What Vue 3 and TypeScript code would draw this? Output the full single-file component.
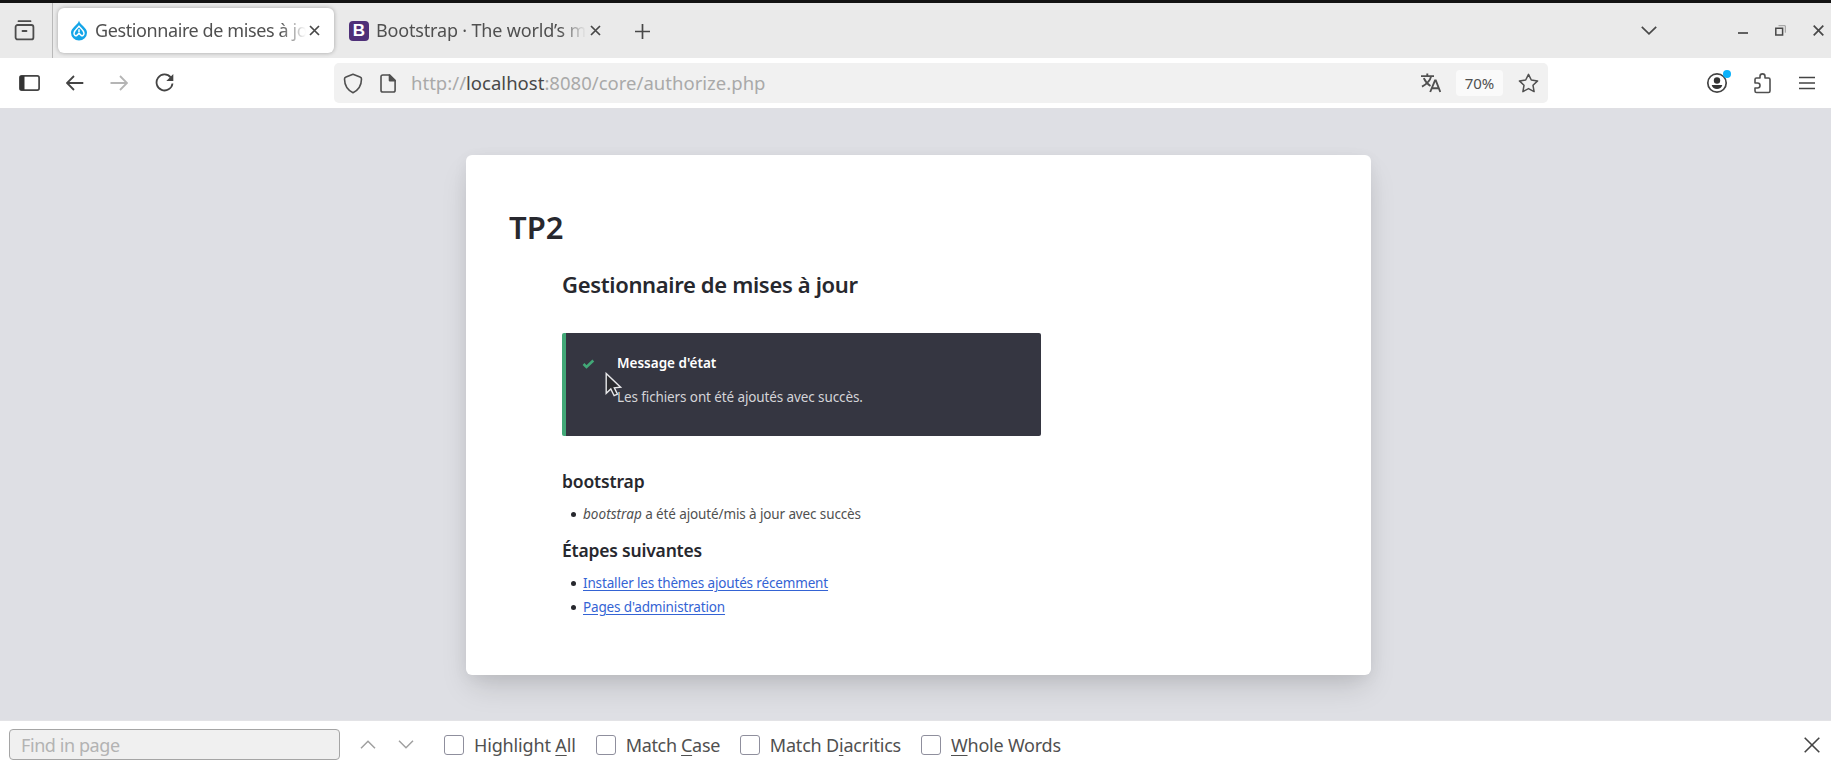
<script setup lang="ts">
interface FindOption {
  id: string
  before: string
  key: string
  after: string
}

const findOptions: FindOption[] = [
  { id: 'highlight', before: 'Highlight ', key: 'A', after: 'll' },
  { id: 'case', before: 'Match ', key: 'C', after: 'ase' },
  { id: 'diacritics', before: 'Match D', key: 'i', after: 'acritics' },
  { id: 'words', before: '', key: 'W', after: 'hole Words' },
]

const nextSteps: string[] = ['Installer les thèmes ajoutés récemment', "Pages d'administration"]
</script>

<template>
  <div class="window">
    <header class="tabbar">
      <div class="overview">
        <svg width="22" height="22" viewBox="0 0 22 22" fill="none" stroke="#4c4c4c" stroke-width="1.8" stroke-linecap="round">
          <path d="M4.5 1.2h12M3.6 5h13.8a2 2 0 0 1 2 2v10.4a2 2 0 0 1-2 2H3.6a2 2 0 0 1-2-2V7a2 2 0 0 1 2-2zM8.5 11h4" />
        </svg>
      </div>
      <div class="tab active">
        <svg class="favicon drupal" width="18" height="21" viewBox="0 0 18 21">
          <path d="M9 .5C8.300 3.400 6.400 4.600 4.700 6.300 2.300 8.600 1 10.300 1 12.700a8 7.800 0 0 0 16 0c0-2.400-1.300-4.100-3.700-6.400C11.600 4.600 9.700 3.400 9 .5z" fill="#14a5e8" />
          <path d="M9 6.200C7.500 8.500 4 10.200 4 13.200c0 2 1.500 3 2.800 2.300L9 13.200l2.200 2.300c1.300.7 2.800-.3 2.800-2.300 0-3-3.500-4.700-5-7zM9 9.200v3" fill="none" stroke="#fff" stroke-width="1.500" stroke-linejoin="round" />
        </svg>
        <span class="title first">Gestionnaire de mises à jour</span>
        <svg class="close" width="11" height="11" viewBox="0 0 11 11"><path d="M1 1l9 9M10 1l-9 9" /></svg>
      </div>
      <div class="tab">
        <span class="favicon bs">B</span>
        <span class="title second">Bootstrap · The world’s most</span>
        <svg class="close" width="11" height="11" viewBox="0 0 11 11"><path d="M1 1l9 9M10 1l-9 9" /></svg>
      </div>
      <svg class="newtab" width="15" height="15" viewBox="0 0 15 15"><path d="M7.500 0v15M0 7.500h15" /></svg>
      <div class="winctl">
        <svg width="16" height="9" viewBox="0 0 16 9"><path d="M.8 .8L8 7.800 15.200 .8" /></svg>
        <svg class="min" width="10" height="2" viewBox="0 0 10 2"><path d="M0 1h10" /></svg>
        <svg class="restore" width="11" height="11" viewBox="0 0 11 11">
          <path d="M3.500 .7h6.800v7" stroke="#999" stroke-width="1" /><path d="M.8 3.300h6.800v6.800H.8z" stroke-width="1.500" />
        </svg>
        <svg width="11" height="11" viewBox="0 0 11 11"><path d="M.7 .7l9.600 9.600M10.300 .7L.7 10.300" /></svg>
      </div>
    </header>

    <nav class="toolbar">
      <div class="navbuttons">
        <svg width="21" height="16" viewBox="0 0 21 16"><rect x=".9" y=".9" width="19.200" height="14.200" rx="1.800" fill="none" stroke="#444" stroke-width="1.700" /><path d="M1 1h4.500v14H1z" fill="#333" /></svg>
        <svg class="back" width="18" height="16" viewBox="0 0 18 16"><path d="M17.300 8H1.200M8 1L1 8l7 7" /></svg>
        <svg class="forward" width="18" height="16" viewBox="0 0 18 16"><path d="M.5 8h16.300M10 1l7 7-7 7" /></svg>
        <svg class="reload" width="20" height="20" viewBox="0 0 20 20"><path d="M15.700 4.300A8 8 0 1 0 17.500 10.500" /><path d="M18.300 1v7h-7z" class="solid" /></svg>
      </div>
      <div class="urlbar">
        <svg width="20" height="21" viewBox="0 0 20 21" fill="none" stroke="#505050" stroke-width="1.600" stroke-linejoin="round">
          <path d="M10 1.200L17 4q1.500.6 1.500 2.100C18.400 12.500 15.500 17.200 10 19.800 4.500 17.200 1.600 12.500 1.500 6.100Q1.500 4.600 3 4z" />
        </svg>
        <svg class="doc" width="16" height="19" viewBox="0 0 16 19" fill="none" stroke="#505050" stroke-width="1.600" stroke-linejoin="round">
          <path d="M2.800 1h6.700l5.600 5.600v9.600a1.800 1.800 0 0 1-1.800 1.800H2.800A1.800 1.800 0 0 1 1 16.200V2.800A1.800 1.800 0 0 1 2.800 1z" /><path d="M9.500 1v5.600h5.600z" fill="#505050" />
        </svg>
        <span class="url">http://<b>localhost</b>:8080/core/authorize.php</span>
        <svg class="translate" width="20" height="20" viewBox="0 0 20 20" fill="none" stroke="#505050" stroke-width="1.900">
          <path d="M0 3.100h13M6.300 .5v2.600M10.200 3.100C9.200 7.300 5.500 11.200 1 13.600M2.800 5.200C4.400 8.800 6.600 11.300 9.500 13" /><path d="M9.200 19L14 7.500h.8L19.300 19M11 15.200h6.600" />
        </svg>
        <span class="zoom">70%</span>
        <svg class="star" width="21" height="21" viewBox="0 0 21 21" fill="none" stroke="#505050" stroke-width="1.500" stroke-linejoin="round">
          <path d="M10.500 1.300l2.800 5.700 6.300.9-4.600 4.400 1.100 6.300-5.600-3-5.600 3L6 12.300 1.400 7.900 7.700 7z" />
        </svg>
      </div>
      <div class="actions">
        <svg class="account" width="26" height="26" viewBox="0 0 26 26">
          <circle cx="11" cy="14" r="9.200" fill="none" stroke="#444" stroke-width="1.700" /><circle cx="11" cy="11.500" r="3.200" fill="#333" /><path d="M5.700 16h10.600c-.5 2.800-2.700 4-5.300 4s-4.800-1.200-5.300-4z" fill="#333" /><circle cx="21" cy="5" r="4" fill="#0ab1fa" />
        </svg>
        <svg class="puzzle" width="19" height="21" viewBox="0 0 19 21" fill="none" stroke="#505050" stroke-width="1.600" stroke-linejoin="round">
          <path d="M2 10V6.500Q2 5 3.500 5H7V3.400a2.500 2.500 0 0 1 5 0V5h3.500Q17 5 17 6.500V18q0 1.500-1.500 1.500h-12Q2 19.500 2 18v-3h2.500a2.500 2.500 0 0 0 0-5z" />
        </svg>
        <svg width="16" height="14" viewBox="0 0 16 14" stroke="#444" stroke-width="1.700"><path d="M0 1.500h16M0 7h16M0 12.500h16" /></svg>
      </div>
    </nav>

    <main class="viewport">
      <section class="card">
        <h1>TP2</h1>
        <div class="content">
          <h2>Gestionnaire de mises à jour</h2>
          <div class="message">
            <svg class="check" width="13" height="10" viewBox="0 0 13 10"><path d="M1.500 5l3 3L11.300 1.500" fill="none" stroke="#42a877" stroke-width="2.600" /></svg>
            <div class="body">
              <strong>Message d'état</strong>
              <p>Les fichiers ont été ajoutés avec succès.</p>
            </div>
            <svg class="cursor" width="18" height="26" viewBox="0 0 18 26">
              <path d="M1.200 1.500v19.800l4.600-4.300 3.300 6.700 3.400-1.500-3.200-6.400 6.300-.5z" fill="#2c2c30" stroke="#e8e8ea" stroke-width="1.400" />
            </svg>
          </div>
          <h3>bootstrap</h3>
          <ul>
            <li class="result"><em>bootstrap</em> a été ajouté/mis à jour avec succès</li>
          </ul>
          <h3 class="steps">Étapes suivantes</h3>
          <ul>
            <li v-for="step in nextSteps" :key="step"><a href="#">{{ step }}</a></li>
          </ul>
        </div>
      </section>
    </main>

    <footer class="findbar">
      <input type="text" placeholder="Find in page" aria-label="Find in page" />
      <svg class="prev" width="16" height="9" viewBox="0 0 16 9"><path d="M1 8.200L8 1.200l7 7" /></svg>
      <svg class="next" width="16" height="9" viewBox="0 0 16 9"><path d="M1 .8l7 7 7-7" /></svg>
      <label v-for="o in findOptions" :key="o.id" :class="o.id">
        <span class="box"></span><span class="text">{{ o.before }}<u>{{ o.key }}</u>{{ o.after }}</span>
      </label>
      <svg class="dismiss" width="16" height="16" viewBox="0 0 16 16"><path d="M.7 .7l14.600 14.600M15.300 .7L.7 15.300" /></svg>
    </footer>
  </div>
</template>

<style>
body {
  margin: 0;
  overflow: hidden;
}
</style>

<style scoped>
* {
  box-sizing: border-box;
}
.window {
  width: 1831px;
  height: 767px;
  display: flex;
  flex-direction: column;
  font-family: "Noto Sans", "Open Sans", sans-serif;
  font-size: 18px;
  color: #505050;
  background: #fff;
}
svg {
  display: block;
  flex: none;
}
.tabbar {
  height: 58px;
  flex: none;
  display: flex;
  align-items: center;
  border-top: 3px solid #131313;
  background: #eaeaea;
}
.overview {
  width: 53px;
  height: 55px;
  flex: none;
  padding: 17px 0 0 14px;
  border-right: 1px solid #b9b9b9;
}
.tab {
  width: 276px;
  height: 45px;
  margin-left: 5px;
  padding: 0 14px 0 12px;
  flex: none;
  display: flex;
  align-items: center;
  border-radius: 6px;
}
.tab.active {
  background: #fff;
  box-shadow: 0 0 4px rgba(0, 0, 0, 0.3);
}
.tab + .tab {
  margin-left: 4px;
}
.favicon {
  flex: none;
}
.bs {
  width: 20px;
  height: 20px;
  margin-left: -1px;
  border-radius: 4px;
  background: #4f3079;
  color: #fff;
  font: 700 17px/20px "Liberation Sans", sans-serif;
  text-align: center;
}
.title {
  flex: none;
  overflow: hidden;
  white-space: nowrap;
  line-height: 28px;
  padding-bottom: 2px;
  mask-image: linear-gradient(to right, #000 calc(100% - 26px), transparent);
}
.first {
  width: 211px;
  margin: 0 3px 0 7px;
  letter-spacing: -0.4px;
}
.second {
  width: 210px;
  margin: 0 4px 0 7px;
  letter-spacing: -0.17px;
}
.close,
.newtab,
.winctl svg {
  fill: none;
  stroke: #484848;
  stroke-width: 1.7;
}
.newtab {
  margin: 1px 0 0 21px;
}
.winctl {
  margin: 0 7px 0 auto;
  display: flex;
  align-items: center;
}
.winctl .min {
  margin: 5px 0 0 81px;
}
.winctl .restore {
  margin: 0 27px;
}
.toolbar {
  height: 51px;
  flex: none;
  display: flex;
  align-items: center;
  border-bottom: 1px solid #dfdfe3;
  background: #fff;
}
.navbuttons {
  width: 334px;
  flex: none;
  padding-left: 19px;
  display: flex;
  align-items: center;
}
.navbuttons .back,
.forward,
.reload {
  fill: none;
  stroke: #444;
  stroke-width: 1.8;
}
.back {
  margin-left: 26px;
}
.forward {
  margin: 0 27px 0 26px;
  stroke: #b5b5b5;
}
.reload .solid {
  fill: #444;
  stroke: none;
}
.urlbar {
  width: 1214px;
  height: 40px;
  flex: none;
  padding: 0 9px;
  display: flex;
  align-items: center;
  border-radius: 5px;
  background: #f1f1f1;
}
.doc {
  margin-left: 17px;
}
.url {
  margin: 0 auto 1px 15px;
  color: #a9a9a9;
  font-size: 18.5px;
  line-height: 28px;
  letter-spacing: 0.02px;
}
.url b {
  color: #484848;
  font-weight: 400;
}
.zoom {
  width: 47px;
  height: 26px;
  margin: 0 15px;
  border-radius: 4px;
  background: #fafafa;
  font-size: 15px;
  line-height: 26px;
  text-align: center;
}
.actions {
  flex: 1;
  padding: 0 16px 0 0;
  display: flex;
  align-items: center;
  justify-content: flex-end;
}
.account {
  margin-top: -3px;
}
.puzzle {
  margin: 0 27px 0 21px;
}
.viewport {
  height: 612px;
  flex: none;
  padding-top: 46px;
  overflow: hidden;
  background: #dedfe4;
  border-bottom: 1px solid #e3e3e6;
}
.card {
  width: 905px;
  height: 520px;
  margin-left: 466px;
  padding: 50px 43px 0;
  border-radius: 6px;
  background: #fff;
  box-shadow: 0 15px 30px -5px rgba(0, 0, 0, 0.15), 0 3px 15px rgba(0, 0, 0, 0.05);
}
h1,
h2,
h3,
p,
ul {
  margin: 0;
}
h1,
h2,
h3 {
  color: #27282e;
  font-weight: 600;
}
h1 {
  font-size: 31px;
  line-height: 44px;
}
.content {
  padding-left: 53px;
}
h2 {
  margin-top: 20px;
  font-size: 22px;
  line-height: 30px;
  letter-spacing: -0.34px;
}
.message {
  position: relative;
  width: 479px;
  height: 103px;
  margin-top: 34px;
  display: flex;
  border-left: 4px solid #42a877;
  border-radius: 2px;
  background: #353641;
  color: #d4d4d8;
  font-size: 13.5px;
}
.check {
  margin: 26px 22px 0 16px;
}
.body {
  padding: 20px 0 0;
  line-height: 20px;
}
.body strong {
  display: block;
  color: #fff;
  font-weight: 600;
}
.body p {
  margin-top: 14px;
  letter-spacing: -0.11px;
}
.cursor {
  position: absolute;
  left: 39px;
  top: 39px;
}
h3 {
  margin-top: 32px;
  font-size: 17.5px;
  line-height: 26px;
  letter-spacing: -0.15px;
}
h3.steps {
  margin-top: 11px;
  letter-spacing: -0.2px;
}
ul {
  margin-top: 8px;
  padding: 0;
  list-style: none;
  font-size: 13.5px;
  line-height: 24px;
  letter-spacing: -0.15px;
}
li {
  display: flex;
  align-items: center;
  white-space: pre;
}
.result {
  letter-spacing: -0.12px;
}
em {
  letter-spacing: 0.05px;
}
li::before {
  content: "";
  width: 5px;
  height: 5px;
  margin: 1px 7px 0 9px;
  border-radius: 50%;
  background: #27282e;
}
a {
  color: #3463d4;
  text-decoration: underline;
  text-underline-offset: 2px;
}
.findbar {
  height: 46px;
  flex: none;
  padding: 3px 11px 2px 9px;
  display: flex;
  align-items: center;
  background: #fff;
}
input {
  width: 331px;
  height: 31px;
  padding: 0 10px 0 11px;
  border: 1.5px solid #a5a5a5;
  border-radius: 4px;
  outline: 0;
  background: #f0f0f0;
  font: 18px "Noto Sans", sans-serif;
  letter-spacing: -0.42px;
}
input::placeholder {
  color: #b3b3b3;
  opacity: 1;
}
.prev,
.next {
  margin-left: 20px;
  fill: none;
  stroke: #a0a0a0;
  stroke-width: 1.5;
}
.next {
  margin: 0 10px 0 22px;
}
label {
  height: 28px;
  margin-left: 20px;
  display: flex;
  align-items: center;
  line-height: 28px;
  white-space: pre;
}
.box {
  width: 20px;
  height: 20px;
  margin-right: 10px;
  border: 1.5px solid #8f8f9d;
  border-radius: 3px;
}
.highlight {
  width: 132px;
  letter-spacing: -0.15px;
}
.case {
  width: 124px;
  letter-spacing: -0.33px;
}
.diacritics {
  width: 161px;
  letter-spacing: -0.2px;
}
.words {
  letter-spacing: -0.22px;
}
u {
  text-underline-offset: 3px;
  text-decoration-thickness: 1px;
}
.dismiss {
  margin-left: auto;
  fill: none;
  stroke: #444;
  stroke-width: 1.6;
}
</style>
